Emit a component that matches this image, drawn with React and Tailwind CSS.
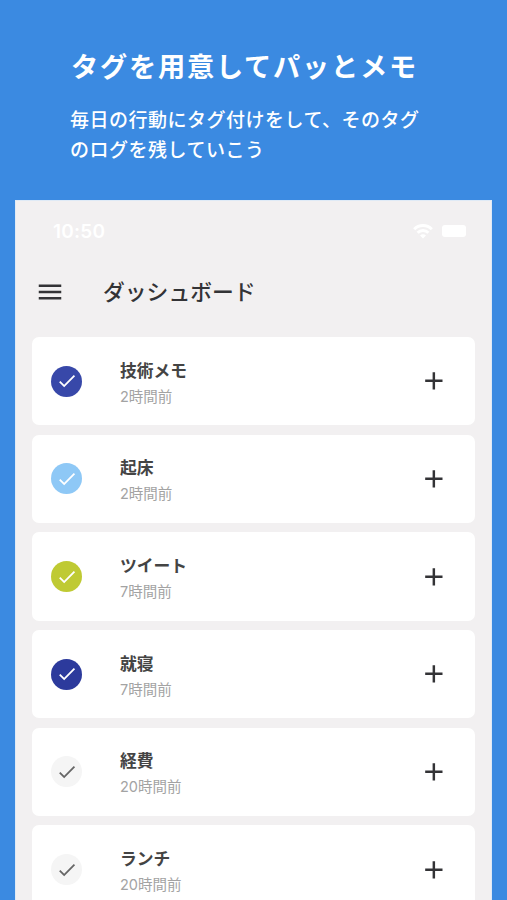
import React from 'react';
import { MdAdd, MdCheck, MdMenu } from 'react-icons/md';

const tags = [
    { name: '技術メモ', time: '2時間前', color: 'bg-[#3848a9] text-white' },
    { name: '起床', time: '2時間前', color: 'bg-[#8ec8f6] text-white' },
    { name: 'ツイート', time: '7時間前', color: 'bg-[#bfca33] text-white' },
    { name: '就寝', time: '7時間前', color: 'bg-[#2c3a9c] text-white' },
    { name: '経費', time: '20時間前', color: 'bg-[#f5f5f5] text-[#666666]' },
    { name: 'ランチ', time: '20時間前', color: 'bg-[#f5f5f5] text-[#666666]' },
];

function WifiIcon() {
    return (
        <svg
            className="w-[20px] h-[15px]"
            viewBox="0 0 20 15"
            fill="none"
            stroke="currentColor"
            strokeWidth="3"
        >
            <path d="M1.2 5.2a12.4 12.4 0 0 1 17.6 0" />
            <path d="M4.6 8.8a7.6 7.6 0 0 1 10.8 0" />
            <path d="M10 14.4l-3-3a4.2 4.2 0 0 1 6 0z" fill="currentColor" stroke="none" />
        </svg>
    );
}

function TagCard({ tag }) {
    return (
        <div className="flex items-center h-[88.4px] shrink-0 bg-white rounded-[7px] pl-[19px] pr-[26px]">
            <div
                className={`flex items-center justify-center w-[31px] h-[31px] rounded-full ${tag.color}`}
            >
                <MdCheck size={21.8} />
            </div>
            <div className="flex-1 ml-[38px] pt-[5px]">
                <p className="text-[16.8px] leading-[25px] font-bold text-[#444444]">
                    {tag.name}
                </p>
                <p className="text-[14.5px] leading-[25px] text-[#a3a3a3]">
                    {tag.time}
                </p>
            </div>
            <MdAdd size={29.7} className="text-[#333336]" />
        </div>
    );
}

function App() {
    return (
        <div className="flex flex-col h-screen overflow-hidden bg-[#3b8ae1] font-['Inter','Noto_Sans_CJK_JP',sans-serif]">
            <header className="h-[200px] shrink-0 pt-[48px] pl-[70px] text-white">
                <h1 className="ml-px text-[27.2px] leading-[40px] tracking-[1.8px] font-bold whitespace-nowrap">
                    タグを用意してパッとメモ
                </h1>
                <p className="mt-[18px] text-[19px] leading-[29.5px] tracking-[0.5px] font-medium whitespace-nowrap">
                    毎日の行動にタグ付けをして、そのタグ
                    <br />
                    のログを残していこう
                </p>
            </header>

            <main className="flex flex-col flex-1 min-h-0 ml-[15px] mr-[15px] bg-[#f2f0f1] border border-b-0 border-[#dfeaf6]">
                {/* Status bar */}
                <div className="flex items-center justify-between h-[60px] shrink-0 pl-[37px] pr-[25px] text-white">
                    <span className="pt-[2px] text-[19px] tracking-[0.2px] font-semibold">10:50</span>
                    <div className="flex items-center gap-[9px]">
                        <WifiIcon />
                        <div className="w-[24px] h-[12px] rounded-[3px] bg-white" />
                    </div>
                </div>

                {/* App bar */}
                <div className="flex items-center h-[62px] shrink-0 pl-[19px]">
                    <MdMenu size={30} className="text-[#333336]" />
                    <h2 className="ml-[38px] text-[21.8px] font-medium text-[#333336]">
                        ダッシュボード
                    </h2>
                </div>

                <div className="flex flex-col gap-[9.3px] pt-[14px] pl-[16px] pr-[16px]">
                    {tags.map((tag) => (
                        <TagCard key={tag.name} tag={tag} />
                    ))}
                </div>
            </main>
        </div>
    );
}

export default App;
